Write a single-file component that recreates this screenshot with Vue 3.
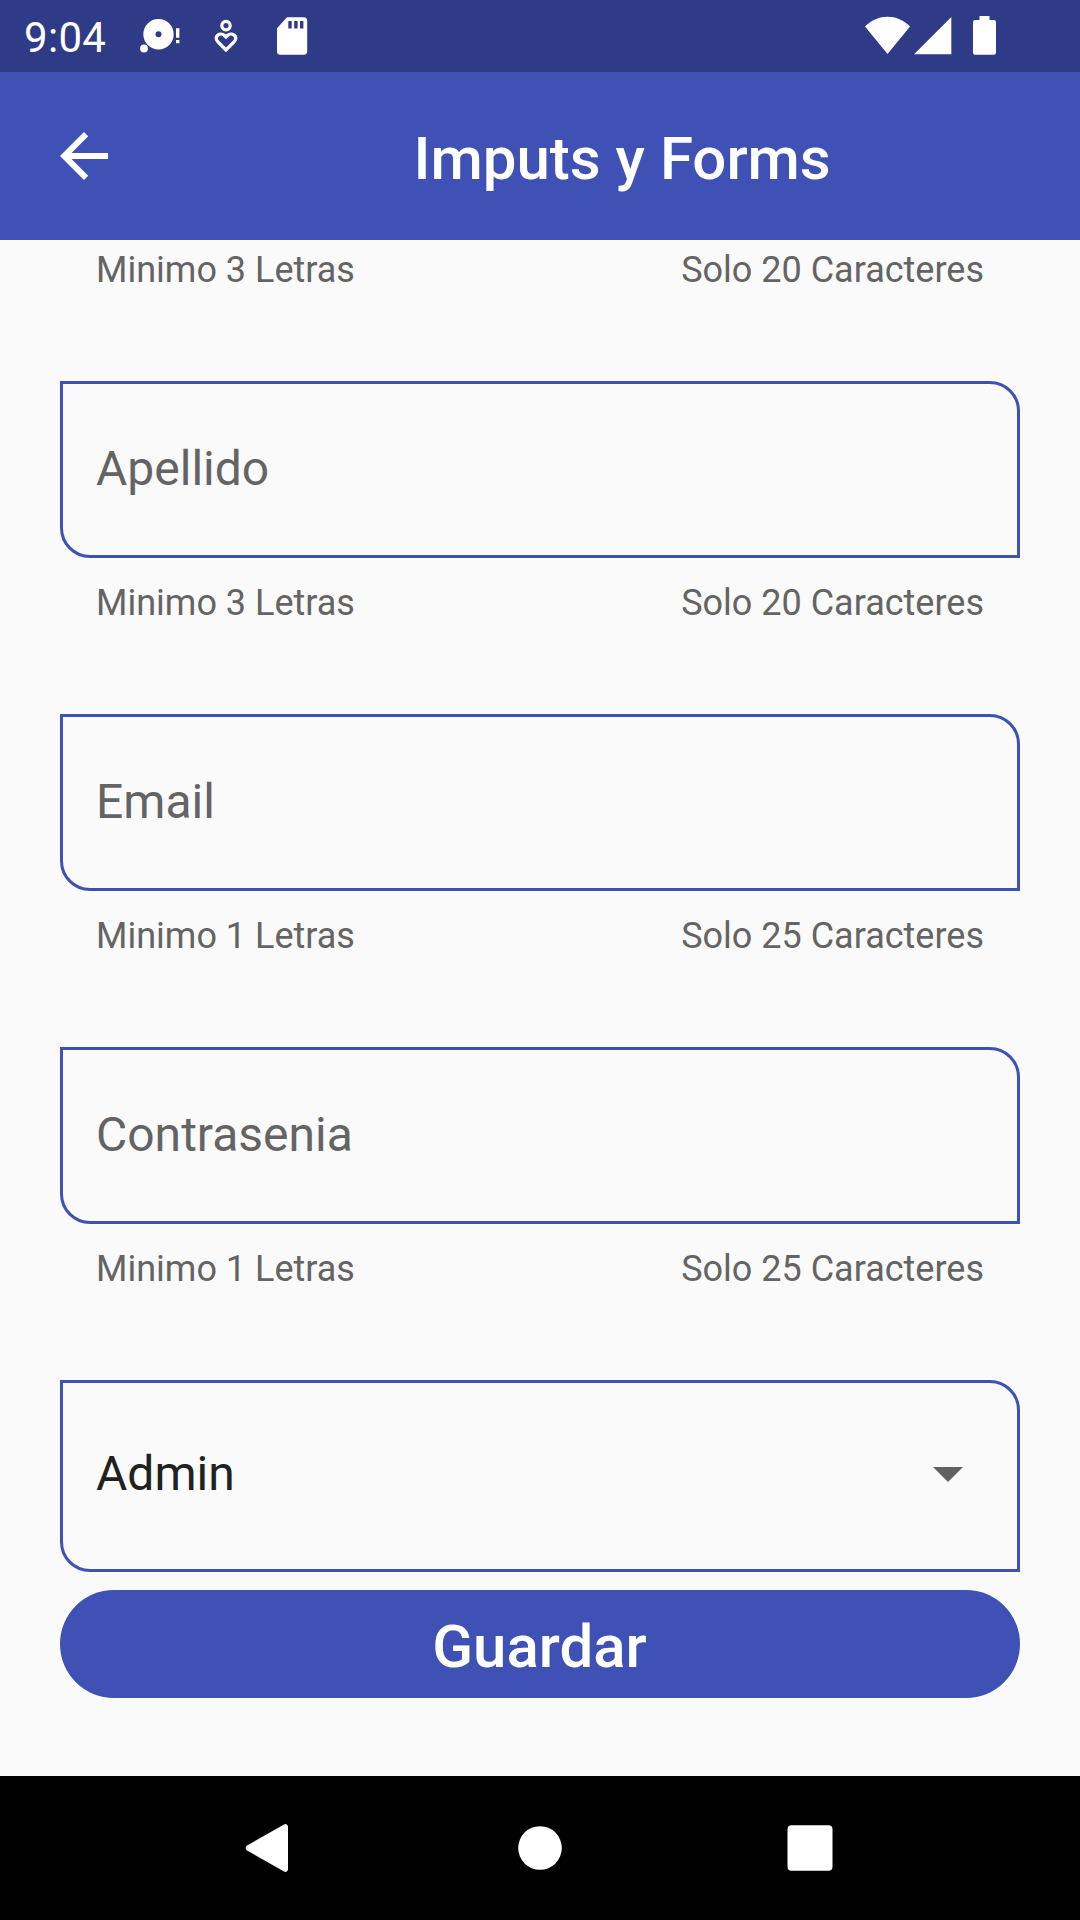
<script setup>
const fields = [
  { label: 'Apellido', min: 'Minimo 3 Letras', max: 'Solo 20 Caracteres' },
  { label: 'Email', min: 'Minimo 1 Letras', max: 'Solo 25 Caracteres' },
  { label: 'Contrasenia', min: 'Minimo 1 Letras', max: 'Solo 25 Caracteres' },
]
</script>

<template>
  <div class="screen">
    <header class="status">
      <span class="time">9:04</span>
      <svg class="notifications" width="170" height="72" viewBox="0 0 170 72" fill="#fff">
        <path fill-rule="evenodd" d="M18.5 19a15.2 15.2 0 1 1 0 30.4a15.2 15.2 0 1 1 0-30.4zM18.5 31.2a3 3 0 1 0 0 6a3 3 0 1 0 0-6z" />
        <circle cx="4" cy="48.5" r="3.9" />
        <path d="M36 28.3h3.4v9.4H36zM36 40h3.4v3.3H36z" />
        <circle cx="86" cy="25.6" r="4.2" fill="none" stroke="#fff" stroke-width="3.2" />
        <path d="M86 50L77.700 41.700C73 36.500 80.500 31.500 84.500 35.500L86 37L87.500 35.500C91.500 31.500 99 36.500 94.300 41.700Z" fill="none" stroke="#fff" stroke-width="3.3" />
        <path fill-rule="evenodd" d="M147 17.300h16.700a3.500 3.500 0 0 1 3.500 3.500v30.400a3.500 3.500 0 0 1-3.500 3.500h-23.200a3.500 3.500 0 0 1-3.500-3.500V28.200zM148.300 21v7.500h3.400V21zM154.200 21v7.500h3.400V21zM160 21v7.500h3.400V21z" />
      </svg>
      <svg class="system" width="134" height="72" viewBox="0 0 134 72" fill="#fff">
        <path d="M0 26.500C13 13.500 32 13.500 45 26.500L22.500 54z" />
        <path d="M49 54.300L86.300 17v37.300z" />
        <path d="M114.500 16h10v4h4.500a2 2 0 0 1 2 2v30.700a2 2 0 0 1-2 2h-19a2 2 0 0 1-2-2V22a2 2 0 0 1 2-2h4.500z" />
      </svg>
    </header>

    <div class="appbar">
      <svg width="72" height="72" viewBox="0 0 24 24" fill="#fff">
        <path d="M20 11H7.830l5.590-5.590L12 4l-8 8 8 8 1.410-1.410L7.830 13H20v-2z" />
      </svg>
      <h1>Imputs y Forms</h1>
    </div>

    <main>
      <div class="helper first"><span>Minimo 3 Letras</span><span>Solo 20 Caracteres</span></div>
      <section v-for="f in fields" :key="f.label" class="field">
        <div class="box">{{ f.label }}</div>
        <div class="helper"><span>{{ f.min }}</span><span>{{ f.max }}</span></div>
      </section>
      <div class="box select">
        <span>Admin</span>
        <svg width="72" height="72" viewBox="0 0 24 24" fill="#616161"><path d="M7 10l5 5 5-5z" /></svg>
      </div>
      <button class="save">Guardar</button>
    </main>

    <nav>
      <svg width="1080" height="144" viewBox="0 0 1080 144" fill="#fff">
        <path d="M284 48.500a2.600 2.600 0 0 1 4 2.200v42.600a2.600 2.600 0 0 1-4 2.200L247 74.500a3 3 0 0 1 0-5z" />
        <circle cx="540" cy="72" r="21.800" />
        <rect x="787.500" y="49.200" width="45" height="45.500" rx="4" />
      </svg>
    </nav>
  </div>
</template>

<style>
body { margin: 0; background: #fafafa; }
</style>

<style scoped>
.screen {
  width: 1080px;
  height: 1920px;
  display: flex;
  flex-direction: column;
  overflow: hidden;
  background: #fafafa;
  font-family: Roboto, "Noto Sans", sans-serif;
}
.status {
  height: 72px;
  flex: none;
  display: flex;
  background: #2f3b87;
  color: #fff;
}
.time {
  width: 116px;
  padding-left: 24px;
  font-size: 42px;
  line-height: 76px;
  letter-spacing: 0.3px;
}
.system { margin-left: 555px; }
.appbar {
  height: 168px;
  flex: none;
  display: flex;
  align-items: center;
  box-sizing: border-box;
  padding: 0 48px;
  background: #3f51b5;
  color: #fff;
}
.appbar h1 {
  margin: 5px 0 0;
  padding-left: 293.5px;
  font-size: 60px;
  font-weight: 500;
  line-height: 70px;
  white-space: nowrap;
}
main {
  flex: 1;
  display: flex;
  flex-direction: column;
  padding: 0 60px;
}
.helper {
  display: flex;
  justify-content: space-between;
  padding: 0 36px;
  margin-top: 24px;
  height: 42px;
  line-height: 42px;
  font-size: 36px;
  color: #646464;
}
.helper.first { margin-top: 9px; margin-bottom: 90px; }
.field { height: 333px; }
.box {
  box-sizing: border-box;
  height: 177px;
  border: 3px solid #3f51b5;
  border-radius: 0 30px 0 30px;
  padding: 0 33px;
  font-size: 48px;
  line-height: 169px;
  color: #646464;
}
.select {
  height: 192px;
  flex: none;
  display: flex;
  align-items: center;
  justify-content: space-between;
  padding-bottom: 5px;
  line-height: 56px;
  color: #212121;
}
.select svg { margin-bottom: 1px; }
.save {
  margin: 18px 0 0;
  height: 108px;
  flex: none;
  border: 0;
  border-radius: 54px;
  padding: 6px 1px 0 0;
  background: #3f51b5;
  color: #fff;
  font: 500 60px/70px Roboto, sans-serif;
}
nav { height: 144px; flex: none; background: #000; }
nav svg { display: block; }
</style>
